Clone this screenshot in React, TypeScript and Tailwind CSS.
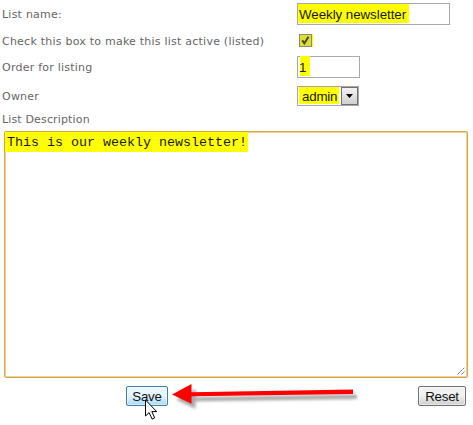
import React from "react";

const label = "relative top-px w-[297px] shrink-0 pl-[2px] whitespace-nowrap tracking-[0.23px]";
const field =
  "border border-[#a9a9a9] bg-white text-[13.33px] leading-[15px] text-[#1a1a00] font-['Liberation_Sans',Arial,sans-serif]";
const button = "relative h-5 rounded-[2px] border text-[13.33px] leading-[19px] tracking-[-0.25px] shadow-[inset_0_0_0_1px_#ffffff80]";

function Highlight({ className, children }: { className: string; children: React.ReactNode }) {
  return <span className={`block bg-[#ffff00] whitespace-nowrap ${className}`}>{children}</span>;
}

function Pointer() {
  return (
    <svg className="absolute left-[17px] top-[12px]" width="14" height="22" viewBox="0 0 14 22">
      <path
        d="M1.5 1v16l3.6-3.4 3 6.5 2.6-1.2-2.9-6.3h4.9z"
        fill="white"
        stroke="black"
        strokeWidth="1"
        strokeLinejoin="miter"
      />
    </svg>
  );
}

function Arrow() {
  return (
    <svg className="absolute left-[168px] top-[378px]" width="200" height="36" viewBox="0 0 200 36">
      <defs>
        <filter id="soft" x="-10%" y="-50%" width="120%" height="200%">
          <feGaussianBlur stdDeviation="1.5" />
        </filter>
      </defs>
      <path
        d="M4 16.5 23.5 6v8.3L185 11.5v4.4L23.5 18.3v7.4z"
        transform="translate(4 5)"
        fill="#777"
        opacity=".65"
        filter="url(#soft)"
      />
      <path d="M4 16.5 23.5 6v8.3L185 11.5v4.4L23.5 18.3v7.4z" fill="#ff0000" />
    </svg>
  );
}

export default function App() {
  return (
    <main className="relative h-[425px] w-[473px] overflow-hidden bg-white">
      <form className="font-['DejaVu_Sans',Verdana,sans-serif] text-[11px] leading-[14px] text-[#666]">
        <div className="flex h-7 items-center">
          <span className={label}>List name:</span>
          <div className={`${field} h-[22px] w-[153px]`}>
            <Highlight className="h-[19px] w-[111px] pl-px pt-[3px] tracking-[-0.05px]">Weekly newsletter</Highlight>
          </div>
        </div>
        <div className="flex h-[25px] items-center">
          <span className={label}>Check this box to make this list active (listed)</span>
          <div className="ml-[2px] flex h-[13px] w-[14px] bg-[#ffff00]">
            <span className="h-[13px] w-[13px] border border-[#8a8a72] bg-[#dede38]">
              <svg width="11" height="11" viewBox="0 0 11 11">
                <path d="M2.2 5.3 4.4 8.2 8.5 1.8" fill="none" stroke="#4a4a0c" strokeWidth="2" />
              </svg>
            </span>
          </div>
        </div>
        <div className="flex h-7 items-center">
          <span className={label}>Order for listing</span>
          <div className={`${field} h-[22px] w-[63px]`}>
            <Highlight className="-mt-px ml-[2px] h-[20px] w-[10px] pt-[4px] -indent-px">1</Highlight>
          </div>
        </div>
        <div className="flex h-[30px] items-center">
          <span className={label}>Owner</span>
          <div className={`${field} flex h-5 w-[62px]`}>
            <Highlight className="ml-px h-[17px] w-[40px] pl-[3px] pt-[2px] tracking-[-0.2px]">admin</Highlight>
            <span className="ml-[2px] flex h-[18px] w-[17px] items-center justify-center border border-[#707070] bg-linear-to-b from-[#f2f2f2] to-[#d0d0d0]">
              <svg width="7" height="4" viewBox="0 0 7 4">
                <path d="M0 0h7L3.5 4z" fill="black" />
              </svg>
            </span>
          </div>
        </div>
        <div className="h-5 pl-[2px] pt-[2px] tracking-[0.15px]">List Description</div>
        <div className="relative ml-1 h-[247px] w-[464px] rounded-[2px] border border-[#d5a64b] font-['Liberation_Mono','Courier_New',monospace] text-[13.33px] leading-[15px] text-[#1a1a00] shadow-[inset_0_0_0_1px_#efd18f]">
          <Highlight className="h-[20px] w-[243px] pl-[2px] pt-[3px]">This is our weekly newsletter!</Highlight>
          <svg className="absolute right-[2px] bottom-[2px]" width="8" height="8" viewBox="0 0 8 8">
            <path d="M.5 7.5l7-7M4.5 7.5l3-3" stroke="#777" strokeDasharray="2 .5" fill="none" />
          </svg>
        </div>
        <div className="mt-2 flex justify-between pr-[7px] pl-[126px] font-['Liberation_Sans',Arial,sans-serif] text-[#111]">
          <button
            type="button"
            className={`${button} w-[42px] border-[#3c7fb1] bg-linear-to-b from-[#eaf6fd] from-45% to-[#a7d9f5]`}
          >
            Save
            <Pointer />
          </button>
          <button
            type="button"
            className={`${button} w-[48px] border-[#707070] bg-linear-to-b from-[#f2f2f2] from-45% to-[#cfcfcf]`}
          >
            Reset
          </button>
        </div>
      </form>
      <Arrow />
    </main>
  );
}
